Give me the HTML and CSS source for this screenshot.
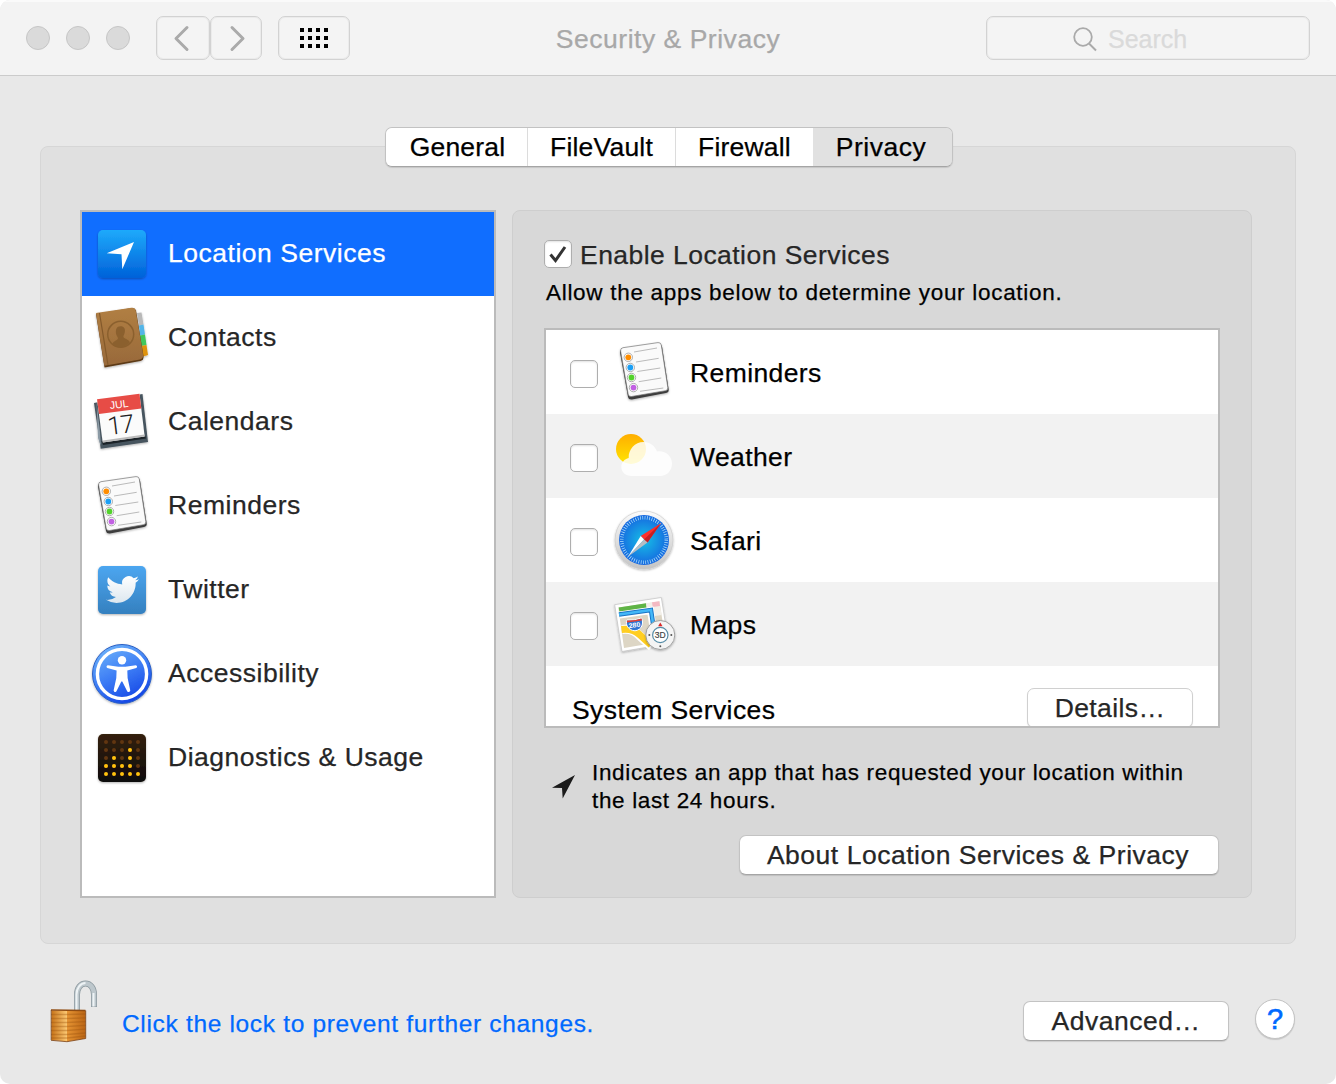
FILE: index.html
```html
<!DOCTYPE html>
<html lang="en">
<head>
<meta charset="utf-8">
<title>Security &amp; Privacy</title>
<link rel="stylesheet" href="styles.css">
</head>
<body>
<svg width="0" height="0" class="defs" aria-hidden="true">
  <defs>
    <linearGradient id="locG" x1="0" y1="0" x2="0" y2="1"><stop offset="0" stop-color="#1eaafb"/><stop offset="1" stop-color="#0061d9"/></linearGradient>
    <linearGradient id="twG" x1="0" y1="0" x2="0" y2="1"><stop offset="0" stop-color="#4ca6f0"/><stop offset="1" stop-color="#3480bf"/></linearGradient>
    <linearGradient id="birdG" x1="0" y1="0" x2="0" y2="1"><stop offset="0" stop-color="#fff"/><stop offset="1" stop-color="#dce7ef"/></linearGradient>
    <linearGradient id="accG" x1="0.2" y1="0" x2="0.7" y2="1"><stop offset="0" stop-color="#6fb4fa"/><stop offset="0.5" stop-color="#3d7df5"/><stop offset="1" stop-color="#1141e4"/></linearGradient>
    <linearGradient id="diaG" x1="0" y1="0" x2="0" y2="1"><stop offset="0" stop-color="#34200c"/><stop offset="1" stop-color="#0d0b08"/></linearGradient>
    <linearGradient id="sunG" x1="0" y1="0" x2="0" y2="1"><stop offset="0" stop-color="#ffae00"/><stop offset="1" stop-color="#ffe500"/></linearGradient>
    <radialGradient id="safG"><stop offset="0" stop-color="#16c0e6"/><stop offset="1" stop-color="#1668e0"/></radialGradient>
    <linearGradient id="rimG" x1="0" y1="0" x2="0" y2="1"><stop offset="0" stop-color="#fbfbfb"/><stop offset="1" stop-color="#c4c4c4"/></linearGradient>
    <linearGradient id="bookG" x1="0" y1="0" x2="0" y2="1"><stop offset="0" stop-color="#b17f43"/><stop offset="1" stop-color="#98693a"/></linearGradient>
    <linearGradient id="lockL" x1="0" y1="0" x2="1" y2="0"><stop offset="0" stop-color="#c8741a"/><stop offset="1" stop-color="#fcc873"/></linearGradient>
    <linearGradient id="lockR" x1="0" y1="0" x2="1" y2="0"><stop offset="0" stop-color="#e69433"/><stop offset="1" stop-color="#bb6514"/></linearGradient>
    <filter id="soft" x="-20%" y="-20%" width="140%" height="150%"><feDropShadow dx="0" dy="1" stdDeviation="1" flood-opacity="0.3"/></filter>
    <symbol id="reminders" viewBox="0 0 60 60" overflow="visible">
      <g filter="url(#soft)">
        <path d="M9 7 L44 2 Q47.500 1.500 48 4.500 L54.700 47.500 Q55 50.500 52 51 L18 57.500 Q14.500 58 14 55 L6 10.500 Q5.700 7.500 9 7Z" fill="#3c3c3c"/>
        <path d="M9 5.700 L44 .6 Q46.700 .3 47.300 3 L53.800 45.500 Q54.200 48.200 51.500 48.700 L17.500 54.500 Q14.700 55 14.200 52.300 L6.600 9 Q6.200 6.200 9 5.700Z" fill="#fafafa" stroke="#777" stroke-width=".7"/>
      </g>
      <path d="M20 10 43 6M22 20 44.700 16.300M23.300 29.500 46.300 26M24.700 39.700 47.300 36M26 49.300 49.300 46" stroke="#a9a9a9" stroke-width=".8"/>
      <g fill="#fff" stroke="#999" stroke-width=".8"><circle cx="14.300" cy="15.300" r="4.200"/><circle cx="16.300" cy="25.500" r="4.200"/><circle cx="17.500" cy="35.500" r="4.200"/><circle cx="19.500" cy="45.600" r="4.200"/></g>
      <circle cx="14.300" cy="15.300" r="2.900" fill="#ff8d00"/><circle cx="16.300" cy="25.500" r="2.900" fill="#1b9ff5"/><circle cx="17.500" cy="35.500" r="2.900" fill="#53d22c"/><circle cx="19.500" cy="45.600" r="2.900" fill="#c160e2"/>
    </symbol>
  </defs>
</svg>

<div class="window">
  <header class="toolbar">
    <div class="controls">
      <div class="lights"><i></i><i></i><i></i></div>
      <div class="nav">
        <button class="tool back" aria-label="Back"><svg width="52" height="42" viewBox="0 0 52 42"><path d="M30 10.500 19 21.500 30 32.500" fill="none" stroke="#aaa" stroke-width="3" stroke-linecap="round" stroke-linejoin="round"/></svg></button>
        <button class="tool forward" aria-label="Forward"><svg width="50" height="42" viewBox="0 0 50 42"><path d="M21 10.500 32 21.500 21 32.500" fill="none" stroke="#aaa" stroke-width="3" stroke-linecap="round" stroke-linejoin="round"/></svg></button>
      </div>
      <button class="tool all" aria-label="Show All"><svg width="28" height="20" viewBox="0 0 28 20"><path d="M0 2h28M0 10h28M0 18h28" stroke="#000" stroke-width="4" stroke-dasharray="4 4"/></svg></button>
    </div>
    <h1 class="title">Security &amp; Privacy</h1>
    <div class="search"><svg width="26" height="26" viewBox="0 0 26 26" fill="none" stroke="#aaa" stroke-width="1.800"><circle cx="11" cy="11" r="8.800"/><path d="M17 17.500 24 24.500" stroke-width="2"/></svg><span>Search</span></div>
  </header>

  <main class="content">
    <nav class="tabs">
      <div class="tab general">General</div><div class="tab vault">FileVault</div><div class="tab firewall">Firewall</div><div class="tab privacy">Privacy</div>
    </nav>
    <section class="panel">
      <ul class="sidebar">
        <li class="side-row selected">
          <svg class="icon" viewBox="0 0 60 60"><rect x="6" y="6" width="48" height="48" rx="5" fill="url(#locG)" filter="url(#soft)"/><path d="M14.700 29.300 42 18 30.300 45.300 29.500 30.300Z" fill="#fff"/></svg><span>Location Services</span></li>
        <li class="side-row">
          <svg class="icon" viewBox="0 0 60 60"><g filter="url(#soft)">
            <path d="M45 5 49.500 4.500 51.500 16.500 47 17.500Z" fill="#b9b9b9"/><path d="M47 17.500 51.500 16.500 53 26.500 48 27.500Z" fill="#52b5e8"/><path d="M48 27.500 53 26.500 54.500 37 49 38Z" fill="#43c75c"/><path d="M49 38 54.500 37 56 47 51 48.500Z" fill="#de920f"/>
            <path d="M4 6 40 0Q43 -.5 44 2.500L51.500 48Q52 52 48.500 53L12.500 59.500 4 6Z" fill="#5d3a18"/>
            <path d="M4 5 39.500 -.3Q43 -.7 43.700 2.500L51.100 46.500Q51.500 50.500 48 51.500L12.300 57.800Z" fill="url(#bookG)"/></g>
            <path d="M7.500 5 16 57" stroke="#83592a" stroke-width="1.200"/>
            <circle cx="28.700" cy="26.300" r="13" fill="none" stroke="#8b602e" stroke-width="1.500"/>
            <path d="M28.500 18.200c3.600 0 5 2.500 4.300 6-.3 2-1.300 3-1.400 4.500.2 2 5.200 2.400 6.500 5.500-4 5.800-14 6.500-17.500 2.200.4-3.700 5.600-3.900 5.500-6.200-.1-1.400-1.500-2.300-1.900-4.600-.6-4 .5-7.400 4.500-7.400Z" fill="#8b602e"/></svg><span>Contacts</span></li>
        <li class="side-row">
          <svg class="icon" viewBox="0 0 60 60"><g filter="url(#soft)"><path d="M2 11 50.500 2 56 50 8.700 56.700Z" fill="#47545e"/><path d="M4.500 10 8 40 9 54 6 46Z" fill="#8b9aa5"/></g><path d="M9.500 49 53 43 54 46.500 11 53Z" fill="#1c2328"/><path d="M5 7.300 47.500 1.800 52.700 44.500 10.700 50.500Z" fill="#fbfbfb"/><path d="M5 7.300 47.500 1.800 49.300 16.500 7 22Z" fill="#e74c46"/><path d="M11 49.500 52.500 43.500" stroke="#bbb" stroke-width="2"/>
            <text class="cal-month" x="27" y="16" transform="rotate(-7 27 12)">JUL</text><text class="cal-day" x="28.500" y="41.500" transform="rotate(-7 28.500 33)">17</text></svg><span>Calendars</span></li>
        <li class="side-row"><svg class="icon"><use href="#reminders" width="60" height="60"/></svg><span>Reminders</span></li>
        <li class="side-row">
          <svg class="icon" viewBox="0 0 60 60"><rect x="6" y="6" width="48" height="48" rx="5" fill="url(#twG)" filter="url(#soft)"/><path transform="translate(14 13) scale(1.375)" fill="url(#birdG)" d="M23.953 4.570a10 10 0 01-2.825.775 4.958 4.958 0 002.163-2.723c-.951.555-2.005.959-3.127 1.184a4.920 4.920 0 00-8.384 4.482C7.690 8.095 4.067 6.130 1.640 3.162a4.822 4.822 0 00-.666 2.475c0 1.710.87 3.213 2.188 4.096a4.904 4.904 0 01-2.228-.616v.06a4.923 4.923 0 003.946 4.827 4.996 4.996 0 01-2.212.085 4.936 4.936 0 004.604 3.417 9.867 9.867 0 01-6.102 2.105c-.39 0-.779-.023-1.170-.067a13.995 13.995 0 007.557 2.209c9.053 0 13.998-7.496 13.998-13.985 0-.21 0-.42-.015-.63A9.935 9.935 0 0024 4.590z"/></svg><span>Twitter</span></li>
        <li class="side-row">
          <svg class="icon" viewBox="0 0 60 60"><circle cx="30" cy="30" r="29.500" fill="url(#accG)" stroke="#2b5fc4" filter="url(#soft)"/><circle cx="30" cy="30" r="24.600" fill="none" stroke="#fff" stroke-width="3.400"/><circle cx="30" cy="16.300" r="4.200" fill="#fff"/><path d="M16 21.300 26.500 22.700H33.500L44 21.300Q46.300 22.500 44.500 24L35.500 26.500 35.800 34 38.500 46.500Q37.500 49 35.500 47.500L30.500 37.500H29.500L24.500 47.500Q22.500 49 21.800 46.500L24.500 34 24.800 26.500 15.500 24Q13.700 22.500 16 21.300Z" transform="translate(-.2 0)" fill="#fff"/></svg><span>Accessibility</span></li>
        <li class="side-row">
          <svg class="icon" viewBox="0 0 60 60"><rect x="6" y="6" width="48" height="48" rx="5" fill="url(#diaG)" filter="url(#soft)"/>
            <g fill="none" stroke-width="4" stroke-linecap="round"><path stroke="#613610" stroke-dasharray="0 8" d="M14 14H47M14 22H47M14 30H47M14 38H47"/><path stroke="#ffc20e" stroke-dasharray="0 8" d="M38 22V39M22 30V39M14 38H39M14 46H47"/></g></svg><span>Diagnostics &amp; Usage</span></li>
      </ul>

      <div class="detail">
        <div class="enable"><span class="check"><svg width="26" height="26" viewBox="0 0 26 26"><path d="M5.500 13.500 10.500 19.500 20 6" fill="none" stroke="#333" stroke-width="3"/></svg></span><span>Enable Location Services</span></div>
        <p class="hint">Allow the apps below to determine your location.</p>
        <div class="apps">
          <div class="app"><span class="check"></span><svg class="icon"><use href="#reminders" width="60" height="60"/></svg><span class="name">Reminders</span></div>
          <div class="app"><span class="check"></span><svg class="icon" viewBox="0 0 60 60"><circle cx="17" cy="23" r="15" fill="url(#sunG)"/><path opacity=".84" fill="#fff" d="M17.500 50C11.500 50 7.300 46 7.300 41 7.300 36.500 10.500 33 14.700 32 14.200 23.500 21 16 29.500 16 36 16 41 20 43 25.500 51 24 58 30 58 37.500 58 44.500 53 50 46 50Z"/></svg><span class="name">Weather</span></div>
          <div class="app"><span class="check"></span><svg class="icon" viewBox="0 0 60 60"><circle cx="30" cy="30" r="29" fill="url(#rimG)" stroke="#c8c8c8" stroke-width=".6" filter="url(#soft)"/><circle cx="30" cy="30" r="25" fill="url(#safG)"/><circle cx="30" cy="30" r="22.300" fill="none" stroke="#b4e1fa" stroke-width="3.600" stroke-dasharray=".7 1.636"/><path d="M47 13.300 33.500 32.500 26.700 26Z" fill="#ff2f2b"/><path d="M47 13.300 33.500 32.500 30 29.500Z" fill="#c81f23"/><path d="M14 46.700 26.700 26 30 29.500Z" fill="#fff"/><path d="M14 46.700 30 29.500 33.500 32.500Z" fill="#b5bdc4"/></svg><span class="name">Safari</span></div>
          <div class="app"><span class="check"></span><svg class="icon" viewBox="0 0 60 60"><g transform="translate(0 2)">
            <path d="M.7 8.700 47.300 1.500 54.700 47.500 8 55.500Z" fill="#fff" stroke="#bbb" stroke-width=".6" filter="url(#soft)"/><path d="M4.300 11.500 45.500 5.500 51.500 45 10 52Z" fill="#ddd6c5"/>
            <path d="M4.700 11.500 32 7.300 32.700 12 5.500 16Z" fill="#5fb446"/><path d="M32 7.300 45.500 5.300 47.500 19 34.500 21 32.700 12Z" fill="#f2efe9"/><path d="M38 6.300 45.300 5.300 46 10 38.700 11Z" fill="#f3b9c2"/>
            <path d="M5.500 19 36.500 14.500 39.500 35" fill="none" stroke="#fff" stroke-width="7"/><path d="M5 18.500 37 14 40 34" fill="none" stroke="#1973c4" stroke-width="4.500"/><path d="M5 18.500 37 14 40 34" fill="none" stroke="#43b7f7" stroke-width="2.500"/>
            <path d="M8 33.500Q19 32 26 40L38 51" fill="none" stroke="#fff" stroke-width="9"/><path d="M7.500 33.500Q19 32 26 39L37 49" fill="none" stroke="#ffce22" stroke-width="7"/>
            <path d="M13 24Q20 25 27.500 22C30 27 28 34 21 34.800 14 34.500 11 28 13 24Z" fill="#2e75d3" stroke="#fff"/><path d="M13 24.500Q20 25 27.500 22.500L28 24.500 13 26.500Z" fill="#e23e34"/><text class="shield" x="20.500" y="31.500" transform="rotate(-7 20 29)">280</text>
            <circle cx="46.300" cy="39" r="14.500" fill="#f4f4f4" stroke="#999" stroke-width=".9" filter="url(#soft)"/><circle cx="46.300" cy="39" r="7.700" fill="#fff" stroke="#578da7" stroke-width="1.200"/><path d="M46.300 26.500 48.500 30.300H44.100Z" fill="#d92828"/><g fill="#555"><circle cx="46.300" cy="50.200" r="1"/><circle cx="35.300" cy="39" r="1"/><circle cx="57.300" cy="39" r="1"/></g><text class="compass" x="46.300" y="41.900">3D</text></g></svg><span class="name">Maps</span></div>
          <div class="app system"><span>System Services</span><button class="push details">Details…</button></div>
        </div>
        <div class="note"><svg width="24" height="24" viewBox="0 0 24 24"><path d="M0 12.700 23 0 10.700 23.500 10 13Z" fill="#1b1b1b"/></svg><p>Indicates an app that has requested your location within<br>the last 24 hours.</p></div>
        <button class="push about">About Location Services &amp; Privacy</button>
      </div>
    </section>
  </main>

  <footer class="footer">
    <svg class="lock" width="50" height="64" viewBox="0 0 50 64"><path d="M27 32V15.500C27 9 30.500 4.500 35.500 4.500S44 9 44 15.500V28" fill="none" stroke="#8a979d" stroke-width="6"/><path d="M27 32V15.500C27 9 30.500 4.500 35.500 4.500S44 9 44 15.500V27.500" fill="none" stroke="#bdc7cc" stroke-width="4.600"/><path d="M26.500 32V15.500C26.500 9 30.500 4 35.500 4M43.500 14V27.500" fill="none" stroke="#eef3f5" stroke-width="2"/>
      <path d="M1.500 31.500H17V62.500L1.500 61Z" fill="url(#lockL)"/><path d="M17 31.500 35.500 32V59.500L17 62.500Z" fill="url(#lockR)"/><path d="M1 31 35.500 31.500" stroke="#8f4c12" stroke-width="1.500"/><path d="M1 35.500H17L35.500 35M1 39.500H17L35.500 38.800M1 43.500H17L35.500 42.600M1 47.500H17L35.500 46.400M1 51.500H17L35.500 50.200M1 55.500H17L35.500 54M1 59H17L35.500 57" fill="none" stroke="#9c5311" stroke-opacity=".38" stroke-width="1.300"/><path d="M1 61.300 17 62.700 35.700 59.500V31.500M1.200 31V61" fill="none" stroke="#7b3d0d" stroke-opacity=".8" stroke-width="1"/></svg>
    <span class="lock-text">Click the lock to prevent further changes.</span>
    <button class="push advanced">Advanced…</button>
    <button class="help" aria-label="Help">?</button>
  </footer>
</div>
</body>
</html>
```
FILE: styles.css
```css
* { box-sizing: border-box; }
body {
  margin: 0;
  background: #fff;
  font: 26.5px/30px "Liberation Sans", Arial, sans-serif;
  letter-spacing: 0.52px;
  -webkit-text-stroke: 0.25px currentColor;
  color: #262626;
}
h1, p, ul { margin: 0; padding: 0; }
button { font: inherit; letter-spacing: inherit; color: inherit; padding: 0; }
svg { display: block; flex: none; overflow: visible; }
.defs { position: absolute; }

.window {
  width: 1336px;
  height: 1084px;
  display: flex;
  flex-direction: column;
  border-radius: 10px;
  overflow: hidden;
  background: #e8e8e8;
}

/* toolbar */
.toolbar {
  height: 76px;
  flex: none;
  display: grid;
  grid-template-columns: 1fr auto 1fr;
  align-items: start;
  padding: 16px 26px 0;
  background: #f3f3f3;
  border-bottom: 1px solid #cbcbcb;
  box-shadow: inset 0 2px 0 #fafafa;
}
.controls { display: flex; align-items: center; }
.lights { display: flex; gap: 16px; margin-right: 26px; }
.lights i {
  width: 24px;
  height: 24px;
  border-radius: 50%;
  background: #dadada;
  border: 1px solid #c6c6c6;
}
.nav { display: flex; margin-right: 16px; }
.tool {
  height: 44px;
  display: flex;
  align-items: center;
  justify-content: center;
  background: #f4f4f4;
  border: 1px solid #d2d2d2;
  border-radius: 7px;
  box-shadow: inset 0 0 0 1px #ebebeb;
}
.back { width: 54px; }
.forward { width: 52px; }
.all { width: 72px; }
.title { font-size: 26.5px; font-weight: 400; color: #a8a8a8; line-height: 44px; padding-top: 1px; }
.search {
  justify-self: end;
  width: 324px;
  height: 44px;
  display: flex;
  align-items: center;
  gap: 10px;
  padding-left: 85px;
  padding-top: 2px;
  border: 1px solid #d2d2d2;
  box-shadow: inset 0 0 0 1px #ebebeb;
  border-radius: 7px;
  background: #f4f4f4;
  font-size: 25px;
  letter-spacing: 0;
  color: #dadada;
}

/* tabs and panel */
.content { padding: 51px 40px 0; display: flex; flex-direction: column; }
.tabs {
  position: relative;
  align-self: center;
  display: flex;
  height: 40px;
  margin: 0 0 -21px 2px;
  border: 1px solid #c2c2c2;
  border-bottom-color: #a5a5a5;
  border-radius: 7px;
  overflow: hidden;
  box-shadow: 0 1px 1px rgba(0, 0, 0, 0.12);
  color: #000;
}
.tab { background: #fff; text-align: center; line-height: 39px; border-right: 1px solid #dcdcdc; letter-spacing: 0.2px; }
.general { width: 142px; padding-left: 2px; }
.vault { width: 148px; }
.firewall { width: 138px; border-color: #e1e1e1; }
.privacy { width: 138px; background: #e1e1e1; border: 0; padding-right: 4px; letter-spacing: 0.5px; }

.panel {
  height: 798px;
  display: flex;
  gap: 16px;
  padding: 63px 43px 0 39px;
  background: #e0e0e0;
  border: 1px solid #d6d6d6;
  border-radius: 8px;
}
.sidebar {
  width: 416px;
  height: 688px;
  flex: none;
  list-style: none;
  background: #fff;
  border: 2px solid #bbb;
}
.side-row {
  height: 84px;
  display: flex;
  align-items: center;
  gap: 16px;
  padding-left: 10px;
}
.side-row span { padding-bottom: 2px; }
.icon { width: 60px; height: 60px; }
.selected { background: #106eff; color: #fff; }
.icon text { -webkit-text-stroke: 0; }
.cal-month { font-size: 10.500px; letter-spacing: 0; text-anchor: middle; fill: #fff; }
.cal-day { font: 300 25px Roboto, sans-serif; letter-spacing: -1px; text-anchor: middle; fill: #222; }

/* detail pane */
.detail {
  width: 740px;
  height: 688px;
  flex: none;
  display: flex;
  flex-direction: column;
  padding: 28px 31px 0;
  background: #d8d8d8;
  border: 1px solid #cecece;
  border-radius: 8px;
}
.enable { display: flex; align-items: center; gap: 8px; height: 30px; letter-spacing: 0.45px; }
.enable span:last-child { padding-top: 1px; }
.check {
  width: 28px;
  height: 28px;
  flex: none;
  background: #fff;
  border: 1px solid #aeaeae;
  border-radius: 5px;
  box-shadow: inset 0 1px 2px rgba(0, 0, 0, 0.12);
}
.hint { font-size: 22.5px; line-height: 28px; letter-spacing: 0.7px; color: #000; padding: 10px 0 0 2px; margin-bottom: 21px; white-space: nowrap; }
.apps { width: 676px; height: 400px; background: #fff; border: 2px solid #bbb; overflow: hidden; color: #000; }
.app { height: 84px; display: flex; align-items: center; padding-left: 24px; letter-spacing: 0.4px; }
.app:nth-child(even) { background: #f2f2f2; }
.app .check { margin: 4px 16px 0 0; }
.app .icon { margin-right: 16px; }
.name { padding-top: 1px; }
.system { align-items: flex-start; justify-content: space-between; padding: 22px 25px 0 26px; }
.system span { padding-top: 7px; }
.shield { font: bold 7px "Liberation Sans", sans-serif; letter-spacing: 0; text-anchor: middle; fill: #fff; }
.compass { font-size: 8.500px; letter-spacing: 0; text-anchor: middle; fill: #444; stroke: #444; stroke-width: 0.2px; }
.push {
  height: 40px;
  flex: none;
  background: #fff;
  border: 1px solid #c3c3c3;
  border-bottom-color: #a5a5a5;
  border-radius: 7px;
  box-shadow: 0 1px 1px rgba(0, 0, 0, 0.12);
}
.details { width: 166px; border-color: #d0d0d0; color: #262626; }
.note { display: flex; gap: 16px; margin: 31px 0 0 8px; font-size: 22.5px; line-height: 28px; letter-spacing: 0.65px; color: #000; white-space: nowrap; }
.note svg { margin-top: 16px; }
.about { width: 480px; align-self: flex-end; margin: 20px 1px 0 0; padding-right: 2px; }

/* footer */
.footer { display: flex; align-items: flex-start; padding: 35px 41px 0 50px; }
.lock-text { flex: 1; padding: 30px 0 0 22px; font-size: 24.5px; letter-spacing: 0.67px; color: #0069ff; }
.advanced { width: 206px; margin: 22px 26px 0 0; }
.help {
  width: 40px;
  height: 40px;
  margin-top: 20px;
  border: 1px solid #c3c3c3;
  border-radius: 50%;
  background: #fff;
  box-shadow: 0 1px 1px rgba(0, 0, 0, 0.15);
  color: #0069ff;
  font-size: 29px;
  letter-spacing: 0;
  -webkit-text-stroke-width: 0.6px;
}
```
